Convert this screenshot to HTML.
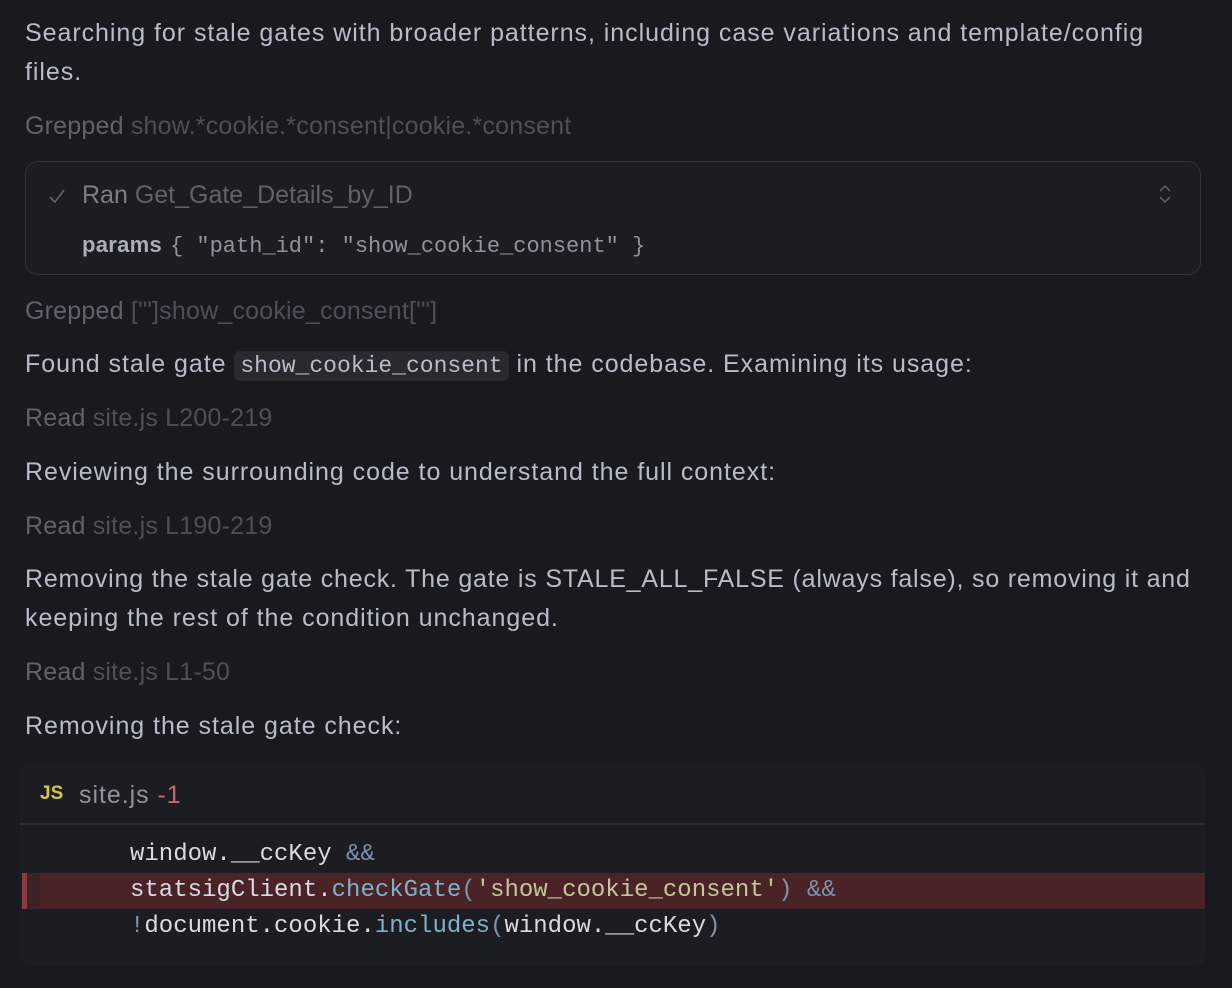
<!DOCTYPE html>
<html><head><meta charset="utf-8"><style>
html,body{margin:0;padding:0;background:#181a20;width:1232px;height:988px;overflow:hidden}
body{font-family:"Liberation Sans",sans-serif;font-size:25px;letter-spacing:0.95px;color:#b6bdca;position:relative}
.l{position:absolute;left:25px;white-space:nowrap;line-height:30px}
.f{color:#5e636c;letter-spacing:0.2px}.f2{color:#4c5159}
.mono{font-family:"Liberation Mono",monospace;letter-spacing:0}
.box{position:absolute;left:25px;top:161px;width:1174px;height:112px;border:1.5px solid #31333a;border-radius:13px;background:#1c1d22}
.ic{background:#282a30;border-radius:6px;padding:2px 6px;font-family:"Liberation Mono",monospace;font-size:23px;letter-spacing:0;color:#b6bdca}
.code{position:absolute;left:20px;top:765px;width:1185px;height:201px;background:#1c1d22;border-radius:10px}
.cl{position:absolute;left:130px;font-family:"Liberation Mono",monospace;letter-spacing:0;font-size:24px;line-height:36px;color:#d7dbe2;white-space:pre}
.fn{color:#7fb2c8}.op{color:#7d93ad}.st{color:#c3c59a}
</style></head><body>
<div class="l" style="top:18px">Searching for stale gates with broader patterns, including case variations and template/config</div>
<div class="l" style="top:57px">files.</div>
<div class="l f" style="top:111px">Grepped <span class="f2">show.*cookie.*consent|cookie.*consent</span></div>
<div class="box">
 <svg style="position:absolute;left:22px;top:26px" width="18" height="16" viewBox="0 0 18 16"><path d="M2 9 L7 14 L16 2" fill="none" stroke="#5e636c" stroke-width="1.6"/></svg>
 <div class="l" style="left:56px;top:18px;color:#7a7f88;letter-spacing:0">Ran <span class="f" style="letter-spacing:0">Get_Gate_Details_by_ID</span></div>
 <div class="l" style="left:56px;top:67px"><b style="color:#a8afbb;font-size:22px;letter-spacing:0.3px">params</b> <span class="mono" style="font-size:22px;color:#8e949e">{ "path_id": "show_cookie_consent" }</span></div>
 <svg style="position:absolute;left:1131px;top:22px" width="16" height="20" viewBox="0 0 16 20"><path d="M3 7 L8 2 L13 7 M3 13 L8 18 L13 13" fill="none" stroke="#5e636c" stroke-width="1.5"/></svg>
</div>
<div class="l f" style="top:296px">Grepped <span class="f2">['"]show_cookie_consent['"]</span></div>
<div class="l" style="top:349px">Found stale gate <span class="ic">show_cookie_consent</span> in the codebase. Examining its usage:</div>
<div class="l f" style="top:403px">Read <span class="f2">site.js L200-219</span></div>
<div class="l" style="top:457px">Reviewing the surrounding code to understand the full context:</div>
<div class="l f" style="top:511px">Read <span class="f2">site.js L190-219</span></div>
<div class="l" style="top:564px;letter-spacing:0.8px">Removing the stale gate check. The gate is STALE_ALL_FALSE (always false), so removing it and</div>
<div class="l" style="top:603px">keeping the rest of the condition unchanged.</div>
<div class="l f" style="top:657px">Read <span class="f2">site.js L1-50</span></div>
<div class="l" style="top:711px">Removing the stale gate check:</div>
<div class="code">
 <div style="position:absolute;left:20px;top:18px;font-weight:bold;color:#d2c94a;font-size:19px;letter-spacing:0">JS</div>
 <div style="position:absolute;left:59px;top:16px;color:#8e949e">site.js <span style="color:#d0646c">-1</span></div>
 <div style="position:absolute;left:0;right:0;top:58px;height:2px;background:#2a2c32"></div>
 <div style="position:absolute;left:2px;right:0;top:108px;height:36px;background:#4a2327"></div>
 <div style="position:absolute;left:2px;width:5px;top:108px;height:36px;background:#8c3a40"></div>
 <div style="position:absolute;left:7px;width:13px;top:108px;height:36px;background:#3a2226"></div>
</div>
<div class="cl" style="top:837px">window.__ccKey <span class="op">&amp;&amp;</span></div>
<div class="cl" style="top:873px">statsigClient.<span class="fn">checkGate</span><span class="op">(</span><span class="st">'show_cookie_consent'</span><span class="op">) &amp;&amp;</span></div>
<div class="cl" style="top:909px"><span class="op">!</span>document.cookie.<span class="fn">includes</span><span class="op">(</span>window.__ccKey<span class="op">)</span></div>
</body></html>
